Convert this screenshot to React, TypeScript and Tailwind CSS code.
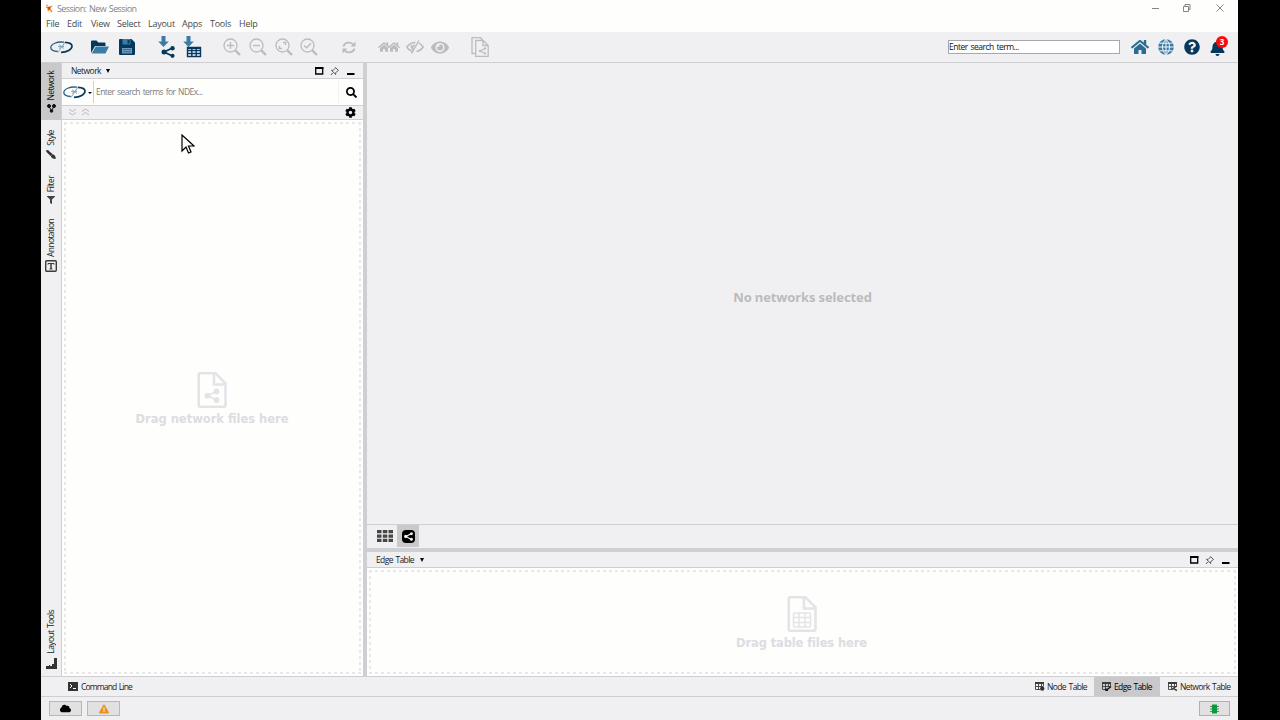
import React from "react";
import { FaQuestionCircle, FaBell, FaEye, FaCog, FaSearch, FaCloud, FaExclamationTriangle, FaFilter, FaHome } from "react-icons/fa";

type P = { className?: string };

const Logo = ({ className = "" }: P) => (
  <svg viewBox="0 0 23 14" className={`h-[14px] w-[23px] shrink-0 ${className}`} fill="none">
    <path d="M14 2.200C7 1.200.8 4.200.8 7.500c0 2.500 3 3.800 7 4" stroke="#2a6386" strokeWidth="1.300" />
    <path d="M11 12.400C17 12.300 22 9.300 22 6.300c0-2.600-3.500-3.900-7-4" stroke="#083858" strokeWidth="1.700" />
    <path d="M8 12.500 15 2M9 4.500l5 4M9 8.500l5-4M8 6.500h6" stroke="#7fa3b8" strokeWidth=".9" />
  </svg>
);

const ShareShape = ({ className = "" }: P) => (
  <svg viewBox="0 0 12 12" className={className} fill="currentColor" stroke="currentColor">
    <path d="M10 2 2.500 6 10 10" fill="none" strokeWidth="1.400" />
    <circle cx="10" cy="2.200" r="1.700" strokeWidth=".3" />
    <circle cx="2.200" cy="6" r="1.900" strokeWidth=".3" />
    <circle cx="10" cy="9.800" r="1.700" strokeWidth=".3" />
  </svg>
);

const Folder = () => (
  <svg viewBox="0 0 18 14" className="h-[14px] w-[18px]">
    <path d="M0 13V1.500Q0 .5 1 .5h4.500L7.300 2.500h6.200q1 0 1 1V6H4z" fill="#05385c" />
    <path d="M4.700 6.500H18L14.500 13.500H.7z" fill="#3a7ca5" />
  </svg>
);

const Floppy = () => (
  <svg viewBox="0 0 16 16" className="size-4">
    <path d="M1 0h11.500L16 3.500V15q0 1-1 1H1q-1 0-1-1V1q0-1 1-1z" fill="#05385c" />
    <path d="M3.500 0h8v5.500h-8z" fill="#3a7ca5" />
    <path d="M8.500 1h2v3.500h-2z" fill="#05385c" />
    <path d="M3 9h10v5.500H3z" fill="#6d9cbb" />
    <path d="M4 10.500h8M4 12.700h8" stroke="#2a6386" strokeWidth=".8" />
  </svg>
);

const ImportIcon = ({ table = false }: { table?: boolean }) => (
  <svg viewBox="0 0 20 22" className="h-[22px] w-5">
    <path d="M4.500 0h4v5.500h3.300L6.500 11 1.200 5.500h3.300z" fill="#3a7ca5" />
    {table ? (
      <g>
        <path d="M5.500 11.500h13v9h-13zM5.500 14.500h13M5.500 17.500h13M9.800 11.500v9M14.200 11.500v9" stroke="#05385c" strokeWidth="1.400" fill="#f4f7f9" />
        <path d="M5 11h14v2H5z" fill="#05385c" />
      </g>
    ) : (
      <g fill="#05385c">
        <path d="M15.500 12 7 16l8.500 4" fill="none" stroke="#05385c" strokeWidth="1.800" />
        <circle cx="15.500" cy="12.200" r="2.200" />
        <circle cx="7" cy="16" r="2.500" />
        <circle cx="15.500" cy="19.800" r="2.100" />
      </g>
    )}
  </svg>
);

const Zoom = ({ d }: { d: string }) => (
  <svg viewBox="0 0 18 18" className="size-[18px]" fill="none" stroke="#bcbcbe">
    <circle cx="7.500" cy="7.500" r="6.500" strokeWidth="1.300" />
    <path d="m12.300 12.300 4.700 4.700" strokeWidth="2.400" />
    <path d={d} strokeWidth="1.400" />
  </svg>
);

const Refresh = () => (
  <svg viewBox="0 0 14 13" className="h-[13px] w-[14px]" fill="none" stroke="#bcbcbe" strokeWidth="1.800">
    <path d="M1.500 5.500C2.500 1 9 .3 11.500 3.700M12.500 7.500C11.500 12 5 12.700 2.500 9.300" />
    <path d="M13.500.5v5h-5zM.5 12.500v-5h5z" fill="#bcbcbe" stroke="none" />
  </svg>
);

const EyeOff = () => (
  <svg viewBox="0 0 18 14" className="h-[14px] w-[18px]" fill="none" stroke="#bcbcbe" strokeWidth="1.500">
    <path d="M7.500 11.500C4 11 1.800 8.700.8 7 3 3.800 6 2.300 9.500 2.400M10.500 11.400C14 10.800 16 8.800 17.200 7 16 5 14.500 3.800 13 3.100M5.500 5C5 7 5.500 8.500 7.500 9.800M5.500 13.500 13 .5M8.500 4.500 6 8" />
  </svg>
);

const FileShape = ({ table = false }: { table?: boolean }) => (
  <svg viewBox="0 0 30 36" className="h-9 w-[30px]" fill="none" stroke="#e4e4e7" strokeWidth="2.500">
    <path d="M2.500 1.300h16l10 10v22q0 1.400-1.400 1.400h-24q-1.400 0-1.400-1.400V2.700q0-1.400 1.400-1.400zM17 1.500v11h11.500" />
    {table ? (
      <path d="M6.500 18.500q0-1.500 1.500-1.500h14q1.500 0 1.500 1.500v11q0 1.500-1.500 1.500H8q-1.500 0-1.500-1.500zM6.500 21.500h17M6.500 26.500h17M12 17v14M18 17v14" strokeWidth="1.500" />
    ) : (
      <g fill="#e4e4e7" stroke="none">
        <path d="m19 19.500-8 4 8 4.500" fill="none" stroke="#e4e4e7" strokeWidth="1.800" />
        <circle cx="19.500" cy="19.500" r="2.900" />
        <circle cx="10.500" cy="23.700" r="2.900" />
        <circle cx="19.500" cy="28" r="2.900" />
      </g>
    )}
  </svg>
);

const DocShare = () => (
  <svg viewBox="0 0 18 20" className="h-5 w-[18px]" fill="none" stroke="#bcbcbe" strokeWidth="1.300">
    <path d="M4 16.500H1V.7h8.500l2 2.300M4.700 3.500h7.500l5 5v10.800H4.700zM12 3.500v5h5" />
    <path d="m14 11.500-5 2.500 5 2.500" />
    <path d="M13 10.500h2v2h-2zM8 13h2v2H8zM13 15.500h2v2h-2z" fill="#bcbcbe" stroke="none" />
  </svg>
);

const House = ({ className = "" }: P) => <FaHome className={className} />;

const Globe = () => (
  <svg viewBox="0 0 16 16" className="size-4">
    <circle cx="8" cy="8" r="7.800" fill="#3a7ca5" />
    <path d="M8 0v16M0 8h16M1.500 4.200h13M1.500 11.800h13M8 .3C3.300 4.500 3.300 11.500 8 15.700M8 .3c4.700 4.200 4.700 11.200 0 15.400" stroke="#f4f7f9" fill="none" />
  </svg>
);

const Cell = ({ children, className = "" }: { children: React.ReactNode; className?: string }) => (
  <div className={`flex w-[26px] shrink-0 items-center justify-center ${className}`}>{children}</div>
);

const Arrow = ({ className = "" }: P) => (
  <span className={`size-0 border-x-[2.500px] border-t-4 border-x-transparent border-t-black ${className}`} />
);

const Controls = ({ className = "" }: P) => (
  <svg viewBox="0 0 40 10" className={`ml-auto h-2.5 w-10 ${className}`} fill="none" stroke="#000">
    <path d="M.7 2h7v6h-7z" strokeWidth="1.300" />
    <path d="M0 2h8.400" strokeWidth="2" />
    <path d="m20.500 1.500 3 3-1 .5-2 2 .3 1.500-4.300-4.200 1.500.2 2-2zM18 6.700 16 9" stroke="#555" />
    <path d="M32 8h7.500" strokeWidth="2" />
  </svg>
);

const TableIcon = ({ kind }: { kind: "node" | "edge" | "net" }) => (
  <svg viewBox="0 0 10 9" className="h-[9px] w-2.5 shrink-0" fill="none" stroke="#3d3d3d">
    <path d="M0 1h9" strokeWidth="2" />
    <path d="M.5 1v6.500H5M.5 4.500h8M3.500 2v5.500M6.500 2v3M8.500 2v2" strokeWidth=".9" />
    {kind === "node" && <circle cx="7.200" cy="6.600" r="2.200" fill="#333" stroke="none" />}
    {kind === "edge" && <path d="m4 8.500 5-4M4 6.500v2h2" stroke="#111" strokeWidth="1.500" />}
    {kind === "net" && <path d="m9 4-4 2.500 4 2" strokeWidth="1.400" />}
  </svg>
);

const V = "[writing-mode:vertical-rl] rotate-180 whitespace-nowrap text-[8.500px] leading-[12px]";

const DASHED =
  "[background:repeating-linear-gradient(90deg,#e8e8ea_0_3px,transparent_3px_6px)_0_0/100%_2px_no-repeat,repeating-linear-gradient(90deg,#e8e8ea_0_3px,transparent_3px_6px)_0_100%/100%_2px_no-repeat,repeating-linear-gradient(180deg,#e8e8ea_0_3px,transparent_3px_6px)_0_0/2px_100%_no-repeat,repeating-linear-gradient(180deg,#e8e8ea_0_3px,transparent_3px_6px)_100%_0/2px_100%_no-repeat]";

export default function App() {
  return (
    <div className="flex h-[720px] w-[1280px] justify-center overflow-hidden bg-black pr-px font-['Open_Sans','Noto_Sans',sans-serif] text-[8.500px] tracking-[-0.620px] text-[#222] [word-spacing:1px]">
      <div className="flex w-[1197px] flex-col bg-[#f0f0f2]">
        <header className="h-8 shrink-0 bg-[#fefefd]">
          <div className="flex h-[17px] items-center pl-1">
            <svg viewBox="0 0 8 9" className="h-[9px] w-2 shrink-0" fill="none" stroke="#ee8519" strokeWidth="1.300">
              <path d="m1 3 3 1 3-2M4 4l-1 3M4 4l3 4" />
              <circle cx="2" cy="1.500" r="1" fill="#f0a04a" stroke="none" />
              <circle cx="4" cy="4" r="1.600" fill="#c94d12" stroke="none" />
            </svg>
            <span className="ml-1 text-[9px] tracking-[-0.600px] text-[#858585]">Session: New Session</span>
            <svg viewBox="0 0 76 10" className="ml-auto mr-[13px] mt-[-2px] h-2.5 w-[76px]" fill="none" stroke="#777" strokeWidth=".9">
              <path d="M3 5.500h7M34.500 3.500h5v5h-5zM36 3.500v-2h5v5h-1.500M67.500 1.500l7 7M74.500 1.500l-7 7" />
            </svg>
          </div>
          <nav className="flex h-[14px] items-center whitespace-nowrap text-[9px] tracking-[-0.250px] text-[#4a4a4a]">
            <span className="w-[22px] shrink-0 pl-[5px]">File</span>
            <span className="ml-1 w-6 shrink-0">Edit</span>
            <span className="w-[26px] shrink-0">View</span>
            <span className="w-[31px] shrink-0">Select</span>
            <span className="w-[34px] shrink-0">Layout</span>
            <span className="w-7 shrink-0">Apps</span>
            <span className="w-[29px] shrink-0">Tools</span>
            <span>Help</span>
          </nav>
        </header>

        <div className="flex h-[31px] shrink-0 items-center border-b border-[#cfcfd1] text-[#bcbcbe]">
          <Cell className="w-[40px]"><Logo /></Cell>
          <Cell className="ml-1.5"><Folder /></Cell>
          <Cell className="ml-px"><Floppy /></Cell>
          <Cell className="ml-3.5"><ImportIcon /></Cell>
          <Cell className="-ml-px"><ImportIcon table /></Cell>
          <Cell className="ml-[14px]"><Zoom d="M7.500 4v7M4 7.500h7" /></Cell>
          <Cell><Zoom d="M4 7.500h7" /></Cell>
          <Cell><Zoom d="M8 4.500h2.500V7M7 10.500H4.500V8" /></Cell>
          <Cell className="-ml-px"><Zoom d="m4.200 7.500 2.300 2.300L11 5.300" /></Cell>
          <Cell className="ml-[14px]"><Refresh /></Cell>
          <Cell className="ml-[14px]"><House className="size-3" /><House className="-ml-0.5 size-3" /></Cell>
          <Cell><EyeOff /></Cell>
          <Cell className="-ml-px"><FaEye className="h-[17px] w-[18px]" /></Cell>
          <Cell className="ml-3.5"><DocShare /></Cell>
          <div className="ml-auto flex h-[14px] w-[172px] items-center border border-[#a6a8ac] bg-white text-[8.500px] tracking-[-0.500px] text-[#111]">Enter search term...</div>
          <Cell className="ml-[7px]"><House className="size-[18px] text-[#2b6b94]" /></Cell>
          <Cell><Globe /></Cell>
          <Cell><FaQuestionCircle className="size-4 text-[#05385c]" /></Cell>
          <Cell className="relative mr-[7px]">
            <FaBell className="mr-0.5 mt-0.5 h-4 w-[17px] text-[#05385c]" />
            <span className="absolute left-[11px] top-[-2px] flex size-3 items-center justify-center rounded-full bg-[#f80b0b] text-[8px] font-bold leading-none tracking-normal text-white">3</span>
          </Cell>
        </div>

        <div className="flex min-h-0 flex-1">
          <aside className="flex w-[21px] shrink-0 flex-col border-r border-[#cfcfd1]">
            <div className="flex h-[57px] shrink-0 flex-col items-center justify-end gap-[3px] bg-[#c9c9cb] pb-[7px] text-[#111]">
              <span className={V}>Network</span>
              <svg viewBox="0 0 9 9" className="size-[9px] shrink-0" fill="#111" stroke="#111"><path d="M2 2.200 4.500 7 7 2.200" fill="none" /><circle cx="2" cy="2" r="1.500" /><circle cx="7" cy="2" r="1.500" /><circle cx="4.500" cy="7" r="1.300" /></svg>
            </div>
            <div className="flex h-[39px] shrink-0 flex-col items-center justify-end gap-1">
              <span className={V}>Style</span>
              <svg viewBox="0 0 10 9" className="h-[9px] w-2.5 shrink-0" fill="#333"><path d="M.3.3Q2-.5 3.500 1.500L6.500 4 4.500 6 1.500 3Q-.3 1.500.3.300zM6.500 4.200Q10 5 9.700 9 5.500 9 4.800 6z" /></svg>
            </div>
            <div className="flex h-[45px] shrink-0 flex-col items-center justify-end gap-1"><span className={V}>Filter</span><FaFilter className="size-[8px] shrink-0 text-[#444]" /></div>
            <div className="flex h-[68px] shrink-0 flex-col items-center justify-end gap-[3px]">
              <span className={V}>Annotation</span>
              <svg viewBox="0 0 12 12" className="size-3 shrink-0" fill="none" stroke="#3c3c3c"><rect x=".7" y=".7" width="10.600" height="10.600" rx="1" strokeWidth="1.400" /><path d="M3 4.700V3.500h6v1.200M4.500 9h3" /><path d="M6 3.500v5.500" strokeWidth="1.500" /></svg>
            </div>
            <div className="mt-auto flex flex-col items-center gap-1 pb-[7px]">
              <span className={V}>Layout Tools</span>
              <svg viewBox="0 0 11 11" className="size-[11px] shrink-0" fill="#333"><path d="M0 8h11v3H0zM8 0h3v11H8zM6 6h2v2H6zM3 7h1v1H3z" /></svg>
            </div>
          </aside>

          <section className="flex w-[301px] shrink-0 flex-col bg-[#fefefd]">
            <div className="flex h-4 shrink-0 items-center border-b border-[#cfcfd1] bg-[#f0f0f2] pl-[9px] pt-px">
              <span className="w-[35px] tracking-[-0.550px]">Network</span>
              <Arrow />
              <Controls className="mr-2" />
            </div>
            <div className="flex h-[26px] shrink-0 items-center">
              <Logo className="ml-px" /><span className="ml-[2px] mt-0.5 size-0 border-x-2 border-t-2 border-x-transparent border-t-black" />
              <div className="ml-[1px] flex h-[22px] w-[246px] items-center border-x border-l-[#cfcfd1] border-r-[#f1f1f1] pl-0.5 tracking-[-0.560px] text-[#7d7d7d]">Enter search terms for NDEx...</div>
              <FaSearch className="ml-[7px] mt-px size-[11px] text-black" />
            </div>
            <div className="flex h-[15px] shrink-0 items-center border-y border-[#cfcfd1] bg-[#f0f0f2] px-[7px]">
              <svg viewBox="0 0 20 8" className="-mt-px h-2 w-5" fill="none" stroke="#b9b9bb"><path d="m0 1 3.500 2.500L7 1M0 4.500 3.500 7 7 4.500M13 3.500 16.500 1 20 3.500M13 7l3.500-2.500L20 7" /></svg>
              <FaCog className="ml-auto size-[11px] text-black" />
            </div>
            <div className={`mx-0.5 mb-[2px] mt-[2px] flex flex-1 flex-col items-center justify-center pr-px pt-[2px] text-[#dcdce1] ${DASHED}`}>
              <FileShape />
              <span className="mt-[3px] font-['DejaVu_Sans',sans-serif] text-[11.500px] font-bold leading-4 tracking-normal [word-spacing:0px]">Drag network files here</span>
            </div>
          </section>
          <div className="w-1 shrink-0 bg-[#cfcfd1]" />

          <main className="flex min-w-0 flex-1 flex-col">
            <div className="flex h-[461px] shrink-0 items-center justify-center pt-2 font-['Noto_Sans',sans-serif] text-[13px] font-bold tracking-[-0.130px] text-[#bbbbbd] [word-spacing:0px]">No networks selected</div>
            <div className="flex h-6 shrink-0 items-center border-t border-[#cfcfd1] pb-px pl-[10px]">
              <svg viewBox="0 0 16 12" className="h-3 w-4" fill="#464646"><path d="M0 0h4.500v3.300H0zM5.800 0h4.500v3.300H5.800zM11.500 0H16v3.300h-4.500zM0 4.400h4.500v3.300H0zM5.800 4.400h4.500v3.300H5.800zM11.500 4.400H16v3.300h-4.500zM0 8.700h4.500V12H0zM5.800 8.700h4.500V12H5.800zM11.500 8.700H16V12h-4.500z" /></svg>
              <div className="ml-1 flex h-[22px] w-[22px] items-center justify-center bg-[#c9c9cb]"><span className="flex size-[13px] items-center justify-center rounded-sm bg-black text-white"><ShareShape className="size-[9px]" /></span></div>
            </div>
            <div className="h-1 shrink-0 bg-[#cfcfd1]" />
            <div className="flex h-4 shrink-0 items-center border-b border-[#cfcfd1] pl-[9px] pt-px">
              <span className="w-11">Edge Table</span><Arrow /><Controls className="mr-2" />
            </div>
            <div className="flex flex-1 bg-[#fefefd] px-0.5 pb-[2px] pt-0.5">
              <div className={`flex flex-1 flex-col items-center justify-center pt-[2px] pr-0.5 text-[#dcdce1] ${DASHED}`}>
                <FileShape table /><span className="mt-[3px] font-['DejaVu_Sans',sans-serif] text-[11.500px] font-bold leading-4 tracking-[-0.120px] [word-spacing:0px]">Drag table files here</span>
              </div>
            </div>
          </main>
        </div>

        <div className="flex h-[21px] shrink-0 items-center border-y border-[#cfcfd1] pt-px">
          <div className="-mt-px ml-[27px] flex h-[9px] w-2.5 items-center justify-center bg-[#333]"><svg viewBox="0 0 8 7" className="h-[7px] w-2" fill="none" stroke="#fff"><path d="m1 1 2 2-2 2M4 5.500h3" /></svg></div>
          <span className="ml-[3px] tracking-[-0.850px]">Command Line</span>
          <div className="-mt-px ml-auto flex h-[19px] w-[59px] items-center gap-[2px]"><TableIcon kind="node" /><span className="mt-px whitespace-nowrap">Node Table</span></div>
          <div className="-mt-px flex h-[19px] w-[66px] items-center gap-[2px] bg-[#c9c9cb] pl-2 text-black"><TableIcon kind="edge" /><span className="mt-px whitespace-nowrap">Edge Table</span></div>
          <div className="-mt-px flex h-[19px] w-[78px] items-center gap-[2px] pl-2"><TableIcon kind="net" /><span className="mt-px whitespace-nowrap">Network Table</span></div>
        </div>
        <footer className="flex h-[23px] shrink-0 items-center px-2">
          <div className="flex h-[15px] w-[33px] items-center justify-center border border-[#b8b8ba] bg-[#e1e1e1]"><FaCloud className="size-[11px] text-black" /></div>
          <div className="ml-[5px] flex h-[15px] w-[33px] items-center justify-center border border-[#b8b8ba] bg-[#e1e1e1]"><FaExclamationTriangle className="size-2.5 text-[#ed921c]" /></div>
          <div className="ml-auto flex h-[15px] w-[31px] items-center justify-center border border-[#b0b0b2] bg-[#e1e1e1]"><svg viewBox="0 0 9 10" className="h-2.5 w-[9px]"><path d="M0 2.500h9M0 5h9M0 7.500h9" stroke="#777" /><path d="M2 .5h5v9H2z" fill="#079a3b" /></svg></div>
        </footer>
      </div>
      <svg viewBox="0 0 14 21" className="absolute left-[181px] top-[134px] h-[21px] w-3.5" fill="#fff" stroke="#000" strokeWidth="1.200"><path d="M1 1v16l4-4 2.500 6 2.500-1-2.500-6H13z" /></svg>
    </div>
  );
}
